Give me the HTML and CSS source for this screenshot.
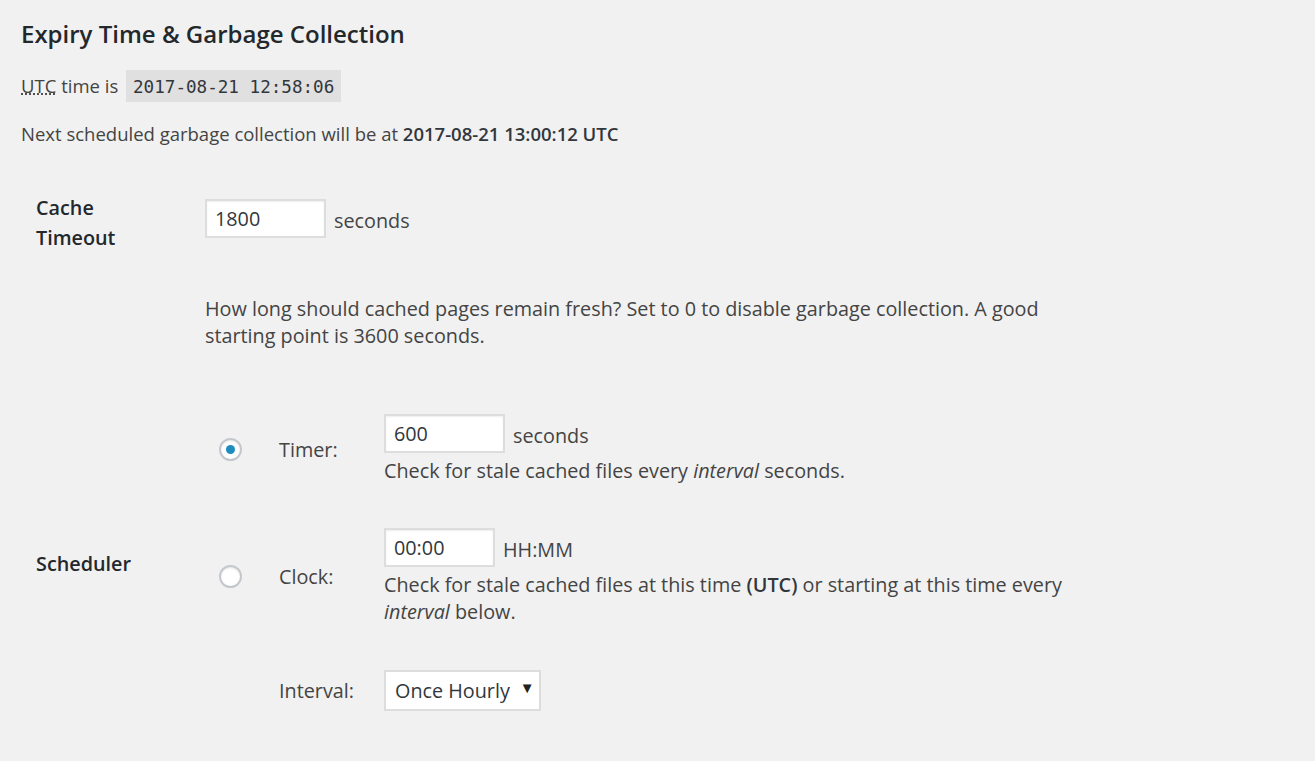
FILE: index.html
```html
<!DOCTYPE html>
<html lang="en">
<head>
  <meta charset="UTF-8" />
  <title>Expiry Time &amp; Garbage Collection</title>
  <link rel="stylesheet" href="styles.css">
</head>
<body>
  <div class="wrap">
    <h2>Expiry Time &amp; Garbage Collection</h2>

    <p class="utc"><abbr title="Coordinated Universal Time">UTC</abbr> time is <code>2017-08-21 12:58:06</code></p>
    <p class="next">Next scheduled garbage collection will be at <strong>2017-08-21 13:00:12 UTC</strong></p>

    <table class="form-table">
      <tr class="row-timeout">
        <th>Cache Timeout</th>
        <td>
          <div class="field"><input type="text" class="num" value="1800" /> <span class="unit">seconds</span></div>
          <p class="description">How long should cached pages remain fresh? Set to 0 to disable garbage collection. A good starting point is 3600 seconds.</p>
        </td>
      </tr>
      <tr class="row-scheduler">
        <th>Scheduler</th>
        <td>
          <table class="sched">
            <tr>
              <td class="radio-cell"><span class="radio checked"></span></td>
              <td class="lbl">Timer:</td>
              <td>
                <div class="field"><input type="text" class="num" value="600" /> <span class="unit">seconds</span></div>
                <div class="hint">Check for stale cached files every <em>interval</em> seconds.</div>
              </td>
            </tr>
            <tr>
              <td class="radio-cell"><span class="radio"></span></td>
              <td class="lbl">Clock:</td>
              <td>
                <div class="field"><input type="text" class="time" value="00:00" /> <span class="unit">HH:MM</span></div>
                <div class="hint">Check for stale cached files at this time <strong>(UTC)</strong> or starting at this time every <em>interval</em> below.</div>
              </td>
            </tr>
            <tr class="interval-row">
              <td class="radio-cell"></td>
              <td class="lbl">Interval:</td>
              <td>
                <div class="select">Once Hourly <span class="arrow">&#9660;</span></div>
              </td>
            </tr>
          </table>
        </td>
      </tr>
    </table>
  </div>
</body>
</html>
```

FILE: styles.css
```css
body {
  margin: 0;
  background: #f1f1f1;
  color: #444;
  font-family: "Open Sans", "Noto Sans", sans-serif;
  font-size: 18.5px;
  line-height: 27px;
}
.wrap {
  padding: 18px 21px 0;
}
h2 {
  margin: 0;
  font-size: 24px;
  font-weight: 600;
  line-height: 32px;
  color: #23282d;
}
p {
  margin: 0;
}
.utc {
  margin-top: 20px;
  line-height: 31px;
}
abbr {
  text-decoration: underline dotted;
}
code {
  font-family: "DejaVu Sans Mono", "Liberation Mono", monospace;
  font-size: 17.6px;
  background: #e0e0e0;
  color: #32373c;
  padding: 7px 7px 5px 7px;
  margin-left: 3px;
}
.next {
  margin-top: 17px;
}
strong {
  font-weight: 600;
  color: #32373c;
}
.form-table {
  margin: 30px 0 0 15px;
  border-collapse: collapse;
  font-size: 19.8px;
}
.form-table > tbody > tr > th {
  width: 130px;
  padding: 16px 39px 0 0;
  text-align: left;
  font-weight: 600;
  color: #23282d;
  line-height: 30px;
  vertical-align: top;
}
.form-table > tbody > tr > td {
  width: 885px;
  padding: 22px 0 0;
  vertical-align: top;
}
.form-table > tbody > .row-scheduler > th {
  vertical-align: middle;
  padding-top: 46px;
}
.form-table > tbody > .row-scheduler > td {
  padding-top: 43px;
}
.field {
  display: flex;
  align-items: center;
  gap: 8px;
}
.unit {
  position: relative;
  top: 2px;
}
input {
  font: inherit;
  color: #32373c;
  background: #fff;
  border: 2px solid #ddd;
  box-shadow: inset 0 1px 2px rgba(0, 0, 0, 0.07);
  height: 39px;
  box-sizing: border-box;
  padding: 0 8px;
  margin: 0;
}
.num {
  width: 121px;
}
.time {
  width: 111px;
}
.description {
  margin-top: 57px;
}
.sched {
  border-collapse: collapse;
}
.sched td {
  vertical-align: middle;
  padding: 22px 0;
}
.sched .interval-row td {
  padding-top: 23px;
}
.sched .radio-cell {
  width: 60px;
  padding-left: 14px;
}
.sched .lbl {
  width: 105px;
}
.hint {
  margin-top: 4px;
}
.radio {
  display: block;
  width: 23px;
  height: 23px;
  box-sizing: border-box;
  border: 2px solid #c4c8cc;
  border-radius: 50%;
  background: #fff;
  box-shadow: inset 0 1px 2px rgba(0, 0, 0, 0.1);
  position: relative;
}
.radio.checked::after {
  content: "";
  position: absolute;
  left: 5px;
  top: 5px;
  width: 9px;
  height: 9px;
  border-radius: 50%;
  background: #1e8cbe;
}
.select {
  display: inline-flex;
  align-items: center;
  height: 41px;
  width: 157px;
  box-sizing: border-box;
  border: 2px solid #ddd;
  background: #fff;
  padding: 0 0 0 9px;
  color: #32373c;
}
.arrow {
  font-size: 15px;
  margin-left: 10px;
  color: #222;
  position: relative;
  top: -3px;
}
```
